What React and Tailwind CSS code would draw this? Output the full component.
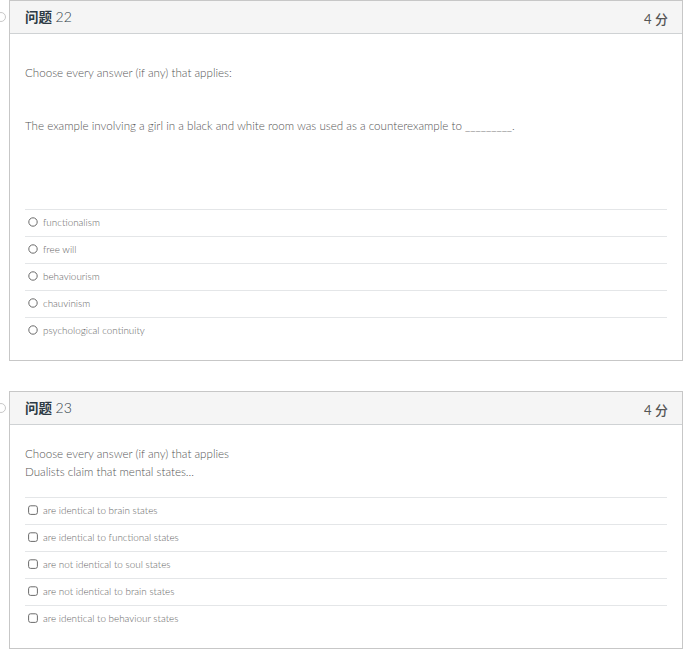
import React from 'react';

const font = { fontFamily: 'Lato, "Noto Sans CJK SC", sans-serif' };

function Radio() {
  return (
    <svg width="10" height="10" viewBox="0 0 10 10" className="shrink-0">
      <circle cx="5" cy="5" r="4.2" fill="none" stroke="#6b6b6b" strokeWidth="1" />
    </svg>
  );
}

function Check() {
  return (
    <svg width="10" height="10" viewBox="0 0 10 10" className="shrink-0">
      <rect x="0.6" y="0.8" width="8.8" height="8.6" rx="2" fill="none" stroke="#6b6b6b" strokeWidth="1" />
    </svg>
  );
}

function Header({ num }) {
  return (
    <div className="relative h-[33px] flex items-center justify-between bg-[#f5f5f5] border-b border-[#cfd2d4] pl-[15px] pr-[14px]">
      <div className="absolute left-[-14px] top-[11px] w-[10px] h-[10px] rounded-full border border-[#c8c8c8]" />
      <div className="text-[14px] leading-[20px] text-[#2d3b45]">
        <span className="font-bold text-[13.5px]">问题</span> <span className="font-light">{num}</span>
      </div>
      <div className="text-[13px] leading-[20px] mt-[3px] text-[#555]">
        <span>4</span> <span className="font-medium">分</span>
      </div>
    </div>
  );
}

function Answers({ items, kind }) {
  return (
    <div>
      {items.map((a) => (
        <div key={a} className="h-[27px] border-t border-[#e4e6e8] flex items-center gap-[5px] pl-[3px] pb-[2px]">
          {kind === 'radio' ? <Radio /> : <Check />}
          <span className="text-[9.9px] font-light text-[#666]">{a}</span>
        </div>
      ))}
    </div>
  );
}

export default function App() {
  return (
    <div className="bg-white w-[700px] h-[660px] overflow-hidden" style={font}>
      <div className="pl-[9px] w-[683px]">
        <div className="border border-[#c7c7c7]">
          <Header num="22" />
          <div className="px-[15px] pt-[30px] pb-[16px] text-[11.6px] font-light leading-[18px] text-[#555]">
            <div>Choose every answer (if any) that applies:</div>
            <div className="mt-[35px]">The example involving a girl in a black and white room was used as a counterexample to _________.</div>
            <div className="mt-[74px]">
              <Answers kind="radio" items={['functionalism', 'free will', 'behaviourism', 'chauvinism', 'psychological continuity']} />
            </div>
          </div>
        </div>

        <div className="mt-[30px] border border-[#c7c7c7]">
          <Header num="23" />
          <div className="px-[15px] pt-[20px] pb-[16px] text-[11.6px] font-light leading-[18px] text-[#555]">
            <div>Choose every answer (if any) that applies</div>
            <div>Dualists claim that mental states...</div>
            <div className="mt-[16px]">
              <Answers kind="check" items={['are identical to brain states', 'are identical to functional states', 'are not identical to soul states', 'are not identical to brain states', 'are identical to behaviour states']} />
            </div>
          </div>
        </div>
      </div>
    </div>
  );
}
